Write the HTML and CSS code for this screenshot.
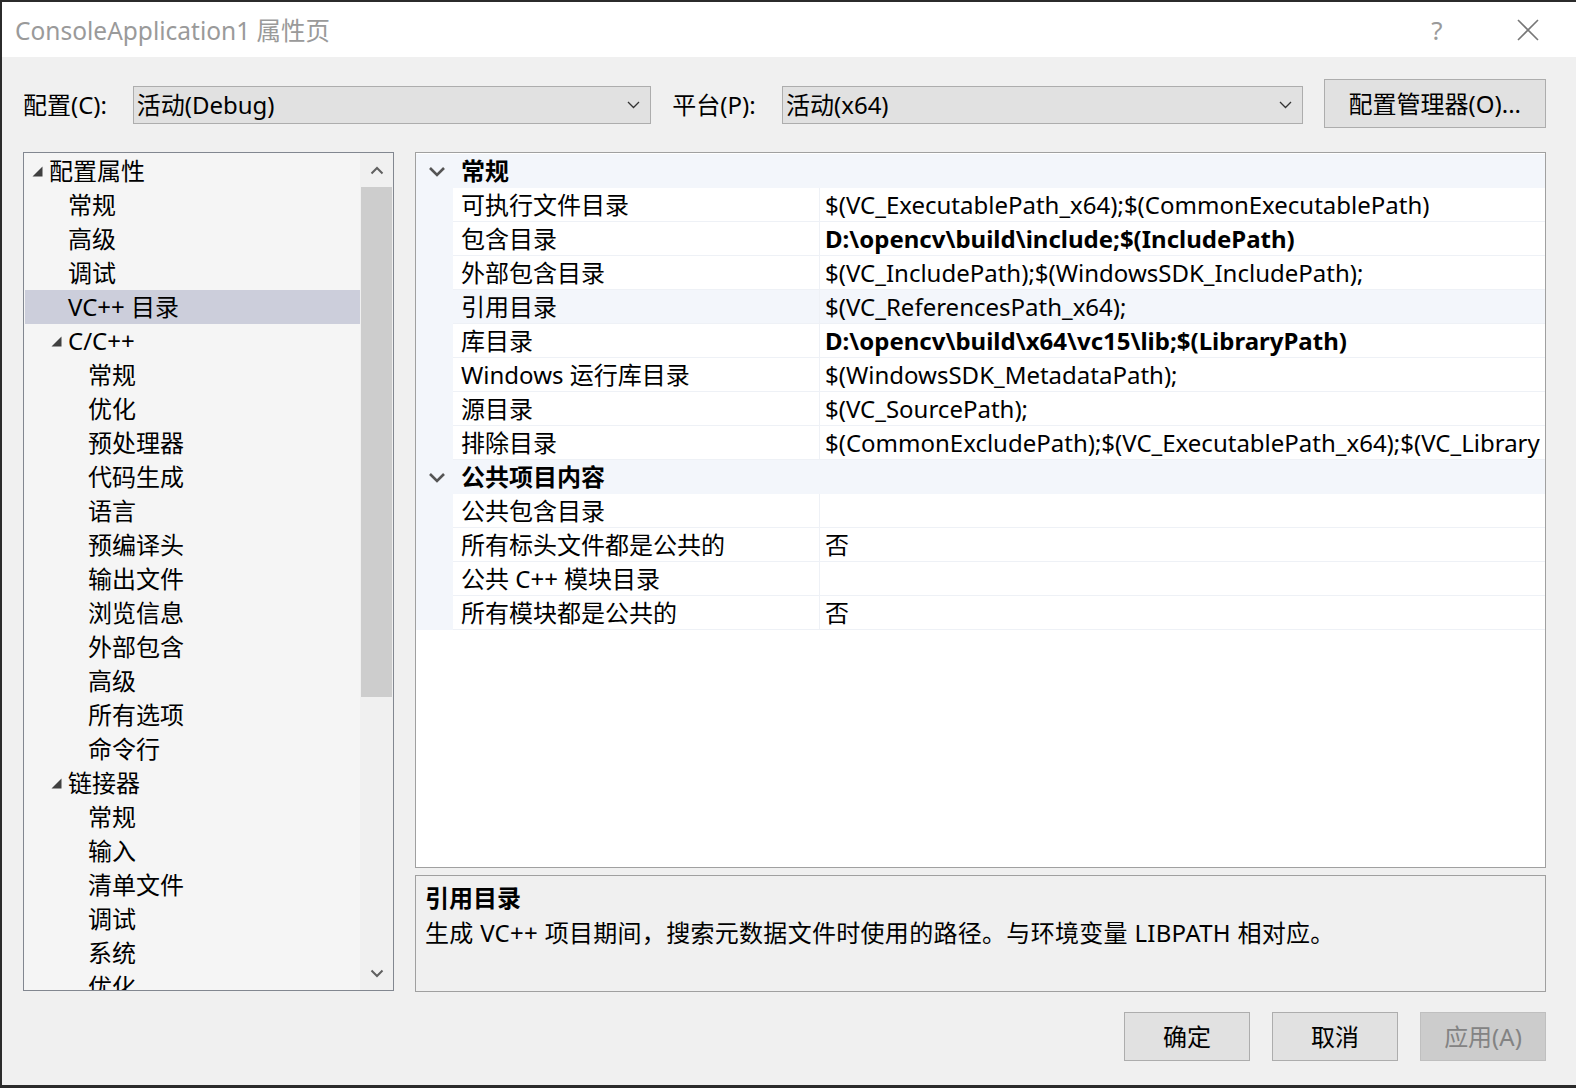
FILE: index.html
```html
<!DOCTYPE html>
<html>
    <head>
        <meta charset="utf-8">
        <title>ConsoleApplication1 属性页</title>
        <link rel="stylesheet" href="styles.css">
    </head>
    <body>
        <div class="window">
            <div class="title_bar">
                <span class="title">ConsoleApplication1 属性页</span>
                <span class="help">?</span>
                <svg class="close" width="22" height="22" viewBox="0 0 22 22"><path d="M1 1L21 21M21 1L1 21" stroke="#777" stroke-width="1.6" fill="none"/></svg>
            </div>
            <div class="content">
                <div class="config_row">
                    <span class="label">配置(C):</span>
                    <div class="combo combo_cfg">
                        <span>活动(Debug)</span>
                        <svg width="13" height="8" viewBox="0 0 13 8"><path d="M1 1L6.5 6.5L12 1" stroke="#333" stroke-width="1.3" fill="none"/></svg>
                    </div>
                    <span class="label label_gap">平台(P):</span>
                    <div class="combo combo_plat">
                        <span>活动(x64)</span>
                        <svg width="13" height="8" viewBox="0 0 13 8"><path d="M1 1L6.5 6.5L12 1" stroke="#333" stroke-width="1.3" fill="none"/></svg>
                    </div>
                    <div class="btn btn_mgr">配置管理器(O)...</div>
                </div>

                <div class="main">
                    <div class="tree">
                        <div class="tree_list">
                            <div class="node lv0"><span class="tw"><svg width="11" height="11" viewBox="0 0 11 11"><path d="M10.5 0.5V10.5H0.5Z" fill="#404040"/></svg></span>配置属性</div>
                            <div class="node lv1"><span class="tw"></span>常规</div>
                            <div class="node lv1"><span class="tw"></span>高级</div>
                            <div class="node lv1"><span class="tw"></span>调试</div>
                            <div class="node lv1 selected"><span class="tw"></span>VC++ 目录</div>
                            <div class="node lv1"><span class="tw"><svg width="11" height="11" viewBox="0 0 11 11"><path d="M10.5 0.5V10.5H0.5Z" fill="#404040"/></svg></span>C/C++</div>
                            <div class="node lv2"><span class="tw"></span>常规</div>
                            <div class="node lv2"><span class="tw"></span>优化</div>
                            <div class="node lv2"><span class="tw"></span>预处理器</div>
                            <div class="node lv2"><span class="tw"></span>代码生成</div>
                            <div class="node lv2"><span class="tw"></span>语言</div>
                            <div class="node lv2"><span class="tw"></span>预编译头</div>
                            <div class="node lv2"><span class="tw"></span>输出文件</div>
                            <div class="node lv2"><span class="tw"></span>浏览信息</div>
                            <div class="node lv2"><span class="tw"></span>外部包含</div>
                            <div class="node lv2"><span class="tw"></span>高级</div>
                            <div class="node lv2"><span class="tw"></span>所有选项</div>
                            <div class="node lv2"><span class="tw"></span>命令行</div>
                            <div class="node lv1"><span class="tw"><svg width="11" height="11" viewBox="0 0 11 11"><path d="M10.5 0.5V10.5H0.5Z" fill="#404040"/></svg></span>链接器</div>
                            <div class="node lv2"><span class="tw"></span>常规</div>
                            <div class="node lv2"><span class="tw"></span>输入</div>
                            <div class="node lv2"><span class="tw"></span>清单文件</div>
                            <div class="node lv2"><span class="tw"></span>调试</div>
                            <div class="node lv2"><span class="tw"></span>系统</div>
                            <div class="node lv2"><span class="tw"></span>优化</div>
                        </div>
                        <div class="vscroll">
                            <div class="arrow"><svg width="14" height="9" viewBox="0 0 14 9"><path d="M1.5 7.5L7 2L12.5 7.5" stroke="#606060" stroke-width="2" fill="none"/></svg></div>
                            <div class="thumb"></div>
                            <div class="track"></div>
                            <div class="arrow"><svg width="14" height="9" viewBox="0 0 14 9"><path d="M1.5 1.5L7 7L12.5 1.5" stroke="#606060" stroke-width="2" fill="none"/></svg></div>
                        </div>
                    </div>

                    <div class="right_col">
                        <div class="grid">
                            <div class="cat">
                                <span class="gut"><svg width="18" height="11" viewBox="0 0 18 11"><path d="M2 2L9 9L16 2" stroke="#555" stroke-width="2.6" fill="none"/></svg></span>
                                <span class="cat_name">常规</span>
                            </div>
                            <div class="row"><span class="gut"></span><span class="name">可执行文件目录</span><span class="value">$(VC_ExecutablePath_x64);$(CommonExecutablePath)</span></div>
                            <div class="row"><span class="gut"></span><span class="name">包含目录</span><span class="value bold">D:\opencv\build\include;$(IncludePath)</span></div>
                            <div class="row"><span class="gut"></span><span class="name">外部包含目录</span><span class="value">$(VC_IncludePath);$(WindowsSDK_IncludePath);</span></div>
                            <div class="row current"><span class="gut"></span><span class="name">引用目录</span><span class="value">$(VC_ReferencesPath_x64);</span></div>
                            <div class="row"><span class="gut"></span><span class="name">库目录</span><span class="value bold">D:\opencv\build\x64\vc15\lib;$(LibraryPath)</span></div>
                            <div class="row"><span class="gut"></span><span class="name">Windows 运行库目录</span><span class="value">$(WindowsSDK_MetadataPath);</span></div>
                            <div class="row"><span class="gut"></span><span class="name">源目录</span><span class="value">$(VC_SourcePath);</span></div>
                            <div class="row"><span class="gut"></span><span class="name">排除目录</span><span class="value">$(CommonExcludePath);$(VC_ExecutablePath_x64);$(VC_Library</span></div>
                            <div class="cat">
                                <span class="gut"><svg width="18" height="11" viewBox="0 0 18 11"><path d="M2 2L9 9L16 2" stroke="#555" stroke-width="2.6" fill="none"/></svg></span>
                                <span class="cat_name">公共项目内容</span>
                            </div>
                            <div class="row"><span class="gut"></span><span class="name">公共包含目录</span><span class="value"></span></div>
                            <div class="row"><span class="gut"></span><span class="name">所有标头文件都是公共的</span><span class="value">否</span></div>
                            <div class="row"><span class="gut"></span><span class="name">公共 C++ 模块目录</span><span class="value"></span></div>
                            <div class="row"><span class="gut"></span><span class="name">所有模块都是公共的</span><span class="value">否</span></div>
                        </div>
                        <div class="desc">
                            <div class="desc_title">引用目录</div>
                            <div class="desc_text">生成 VC++ 项目期间，搜索元数据文件时使用的路径。与环境变量 LIBPATH 相对应。</div>
                        </div>
                    </div>
                </div>

                <div class="button_row">
                    <div class="btn">确定</div>
                    <div class="btn">取消</div>
                    <div class="btn disabled">应用(A)</div>
                </div>
            </div>
        </div>
    </body>
</html>
```

FILE: styles.css
```css
html, body {
    margin:0;
    padding:0;
}
body {
    width:1576px;
    height:1088px;
    overflow:hidden;
    background:#2a2a2a;
    font-family:"Noto Sans", "Noto Sans CJK SC", sans-serif;
    font-size:24px;
    color:#000;
}
.window {
    height:1083px;
    border-top:2px solid #2b2b2b;
    border-left:2px solid #2b2b2b;
    border-bottom:2px solid #2b2b2b;
    background:#f0f0f0;
    display:flex;
    flex-direction:column;
}
/* title bar */
.title_bar {
    height:55px;
    background:#fff;
    display:flex;
    align-items:center;
    padding:0 37px 0 13px;
}
.title {
    flex:1;
    font-size:24.5px;
    color:#9a9a9a;
    white-space:nowrap;
}
.help {
    width:30px;
    text-align:center;
    font-size:26px;
    color:#9a9a9a;
    margin-right:65px;
}
.close {
    display:block;
}
/* content */
.content {
    flex:1;
    display:flex;
    flex-direction:column;
    padding:0 30px 0 21px;
}
.config_row {
    margin-top:22px;
    height:49px;
    display:flex;
    align-items:flex-start;
}
.label {
    width:110px;
    line-height:38px;
    margin-top:7px;
    white-space:nowrap;
}
.label_gap {
    margin-left:21px;
}
.combo {
    margin-top:7px;
    height:36px;
    border:1px solid #adadad;
    background:#e1e1e1;
    display:flex;
    align-items:center;
    justify-content:space-between;
    padding:0 10px 0 3px;
    line-height:36px;
}
.combo_cfg {
    width:505px;
}
.combo_plat {
    width:507px;
}
.btn {
    width:124px;
    height:47px;
    border:1px solid #adadad;
    background:#e1e1e1;
    line-height:47px;
    text-align:center;
    white-space:nowrap;
}
.btn_mgr {
    width:221px;
    margin-left:21px;
}
.btn.disabled {
    background:#cccccc;
    border-color:#bfbfbf;
    color:#838383;
}
/* tree + grid */
.main {
    margin-top:24px;
    height:840px;
    display:flex;
    gap:21px;
}
.tree {
    width:369px;
    height:837px;
    border:1px solid #828790;
    background:#f5f5f5;
    display:flex;
}
.tree_list {
    flex:1;
    overflow:hidden;
    padding:1px 0 0 1px;
}
.node {
    height:34px;
    line-height:34px;
    display:flex;
    align-items:center;
    white-space:nowrap;
}
.node .tw {
    width:19px;
    height:34px;
    display:flex;
    align-items:center;
    padding-left:2px;
    box-sizing:border-box;
}
.node .tw svg {
    display:block;
    margin-top:1px;
}
.lv0 {
    padding-left:5px;
}
.lv1 {
    padding-left:24px;
}
.lv2 {
    padding-left:44px;
}
.node.selected {
    background:#cccedb;
}
.vscroll {
    width:33px;
    background:#f0f0f0;
    display:flex;
    flex-direction:column;
}
.vscroll .arrow {
    height:34px;
    display:flex;
    align-items:center;
    justify-content:center;
}
.vscroll .thumb {
    height:510px;
    margin:0 1px;
    background:#cdcdcd;
}
.vscroll .track {
    flex:1;
}
.right_col {
    width:1131px;
    display:flex;
    flex-direction:column;
    gap:7px;
}
.grid {
    height:714px;
    border:1px solid #a0a0a0;
    background:#fff;
    overflow:hidden;
    padding-top:1px;
}
.cat, .row {
    height:34px;
    display:flex;
    white-space:nowrap;
}
.cat {
    background:#f3f6fb;
    line-height:34px;
    font-weight:bold;
}
.cat .gut {
    display:flex;
    align-items:center;
    padding-left:12px;
}
.gut {
    width:37px;
    flex:none;
    box-sizing:border-box;
    background:#f3f6fb;
}
.row .name, .row .value {
    height:33px;
    line-height:33px;
    border-bottom:1px solid #eef1f6;
    overflow:hidden;
}
.row .name {
    width:358px;
    flex:none;
    padding-left:8px;
    border-right:1px solid #eef1f6;
}
.row .value {
    flex:1;
    padding-left:5px;
}
.cat_name {
    padding-left:8px;
}
.row.current .name, .row.current .value {
    background:#f3f6fb;
}
.bold {
    font-weight:bold;
}
.desc {
    height:111px;
    border:1px solid #a0a0a0;
    background:#f0f0f0;
    padding:4px 0 0 9px;
    line-height:35px;
}
.desc_title {
    font-weight:bold;
}
.desc_text {
    letter-spacing:0.3px;
}
.button_row {
    margin-top:20px;
    display:flex;
    justify-content:flex-end;
    gap:22px;
}
```
